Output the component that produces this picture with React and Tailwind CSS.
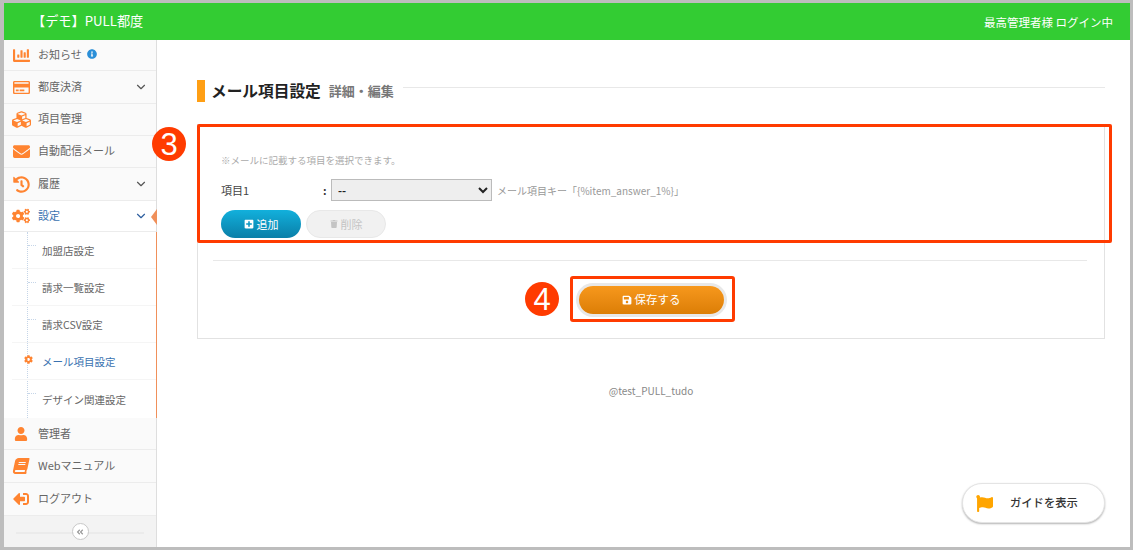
import React from "react";
import { FaChartBar, FaRegCreditCard, FaCubes, FaEnvelope, FaHistory, FaCogs, FaUser, FaBook, FaSignOutAlt, FaFlag, FaPlusSquare, FaTrash, FaSave, FaInfoCircle, FaAngleDoubleLeft, FaCog } from "react-icons/fa";
import { LuChevronDown } from "react-icons/lu";

function Row({ icon: Icon, label, chevron, h, active, info, size = 17, iconClass = "", labelClass = "mt-[-2px]" }) {
  return (
    <div className={`flex items-center border-b border-[#ececec] ${h} ${active ? "bg-white" : "bg-[#fafafa]"} pr-[8px] relative`}>
      <span className="w-[34px] flex justify-center text-[#ff8431]"><Icon size={size} className={iconClass} /></span>
      <span className={`${labelClass} text-[11px] ${active ? "text-[#3a72b0]" : "text-[#666]"} flex items-center gap-[5px]`}>
        {label}
        {info && <FaInfoCircle size={10} className="text-[#2a8fd8]" />}
      </span>
      {chevron && <LuChevronDown size={14} className={`ml-auto ${active ? "text-[#2f5f9f]" : "text-[#555]"}`} />}
      {active && <span className="absolute right-[-1px] top-[8px] w-0 h-0 border-y-[8px] border-y-transparent border-r-[6px] border-r-[#f0905a]" />}
    </div>
  );
}

function Sub({ label, current, last }) {
  return (
    <div className={`relative flex items-center h-[37px] ml-[8px] pl-[30px] pt-[2px] ${last ? "" : "border-b border-[#f5f5f5]"} text-[10.5px] ${current ? "text-[#3a72b0]" : "text-[#666]"}`}>
      {current ? (
        <FaCog size={9} className="absolute left-[12px] top-[12px] text-[#ff8431]" />
      ) : (
        <span className="absolute left-[16px] top-[13px] w-[8px] border-t border-dotted border-[#c5d5e8]" />
      )}
      {label}
    </div>
  );
}

function Circle({ n }) {
  return (
    <span className="w-[34px] h-[34px] rounded-full bg-[#ff3b00] text-white flex items-center justify-center text-[31px] leading-none font-['Liberation_Sans',sans-serif]">{n}</span>
  );
}

export default function App() {
  return (
    <div className="w-[1133px] h-[550px] overflow-hidden bg-[#bdbdbd] pt-[3px] pl-[4px] pr-[3px] pb-[3px] font-['Noto_Sans_CJK_JP','Noto_Sans',sans-serif]">
      <div className="relative h-[544px] bg-white flex flex-col overflow-hidden">
        <header className="h-[37px] shrink-0 bg-[#33cc33] flex items-center text-white pl-[28px] pr-[17px]">
          <span className="text-[13.2px] mt-[-2px]">【デモ】PULL都度</span>
          <span className="ml-auto text-[11.5px] mt-[3px]">最高管理者様 ログイン中</span>
        </header>
        <div className="flex flex-1 min-h-0">
          <aside className="w-[153px] shrink-0 border-r border-[#dedede] flex flex-col">
            <Row icon={FaChartBar} label="お知らせ" info h="h-[31px]" />
            <Row icon={FaRegCreditCard} label="都度決済" chevron h="h-[33px]" />
            <Row icon={FaCubes} label="項目管理" h="h-[32px]" size={19} />
            <Row icon={FaEnvelope} label="自動配信メール" h="h-[32px]" />
            <Row icon={FaHistory} label="履歴" chevron h="h-[33px]" />
            <Row icon={FaCogs} label="設定" chevron active h="h-[31px]" size={18} />
            <div className="relative border-r border-[#f0905a] mr-[-1px] h-[186px]">
              <span className="absolute left-[23px] top-0 bottom-0 border-l border-dotted border-[#c5d5e8]" />
              <Sub label="加盟店設定" />
              <Sub label="請求一覧設定" />
              <Sub label="請求CSV設定" />
              <Sub label="メール項目設定" current />
              <Sub label="デザイン関連設定" last />
            </div>
            <Row icon={FaUser} label="管理者" h="h-[32px]" size={14} labelClass="mt-[0px]" />
            <Row icon={FaBook} label="Webマニュアル" h="h-[33px]" iconClass="-skew-x-12" size={16} labelClass="mt-[-1px]" />
            <Row icon={FaSignOutAlt} label="ログアウト" h="h-[33px]" iconClass="-scale-x-100" size={16} />
            <div className="flex-1 bg-[#f3f3f3] relative flex items-center justify-center">
              <span className="absolute left-[12px] right-[12px] top-1/2 border-t-2 border-[#ebebeb]" />
              <span className="relative w-[17px] h-[17px] rounded-full border border-[#c8c8c8] bg-white flex items-center justify-center text-[#999]"><FaAngleDoubleLeft size={8} /></span>
            </div>
          </aside>

          <main className="flex-1 pl-[40px] pr-[25px] pt-[39px] relative">
            <div className="flex items-center h-[23px]">
              <span className="w-[8px] h-[22px] bg-[#ff9f14]" />
              <span className="ml-[6px] text-[15.7px] font-bold text-[#222]">メール項目設定</span>
              <span className="ml-[8px] text-[13px] font-bold text-[#777]">詳細・編集</span>
              <span className="ml-[9px] flex-1 border-t border-[#e8e8e8] mb-[7px]" />
            </div>
            <div className="relative mt-[22px] h-[215px] border border-[#e2e2e2] pl-[23px] pr-[17px] pt-[28px]">
              <p className="text-[9.5px] leading-[14px] text-[#aaa]">※メールに記載する項目を選択できます。</p>
              <div className="flex items-center mt-[12px] h-[22px]">
                <span className="w-[102px] text-[11px] text-[#444]">項目1</span>
                <span className="w-[8px] text-[11px] font-bold text-[#333]">:</span>
                <select className="w-[161px] h-[22px] border border-[#bbb] bg-[#eeeeee] text-[11px] text-[#222] pl-[2px] font-bold" defaultValue="--">
                  <option>--</option>
                </select>
                <span className="ml-[5px] text-[10px] text-[#999]">メール項目キー「{"{%item_answer_1%}"}」</span>
              </div>
              <div className="flex gap-[5px] mt-[9px]">
                <button className="w-[80px] h-[28px] rounded-full bg-gradient-to-b from-[#12b0dc] to-[#0a7fa8] text-white text-[11px] flex items-center justify-center gap-[3px]"><FaPlusSquare size={10} />追加</button>
                <button className="w-[80px] h-[28px] rounded-full bg-[#f1f1f1] border border-[#e8e8e8] text-[#c4c4c4] text-[11px] flex items-center justify-center gap-[3px]"><FaTrash size={8} />削除</button>
              </div>
              <div className="border-t border-[#e8e8e8] mt-[22px] ml-[-8px]" />
              <div className="flex justify-center mt-[25px] ml-[-6px]">
                <button className="w-[145px] h-[28px] rounded-full bg-gradient-to-b from-[#f7981c] to-[#dc7e05] text-white text-[11.5px] flex items-center justify-center gap-[3px] ring-[3px] ring-[#e8e8e8]"><FaSave size={10} />保存する</button>
              </div>
            </div>
            <p className="text-center text-[10px] text-[#888] mt-[44px]">@test_PULL_tudo</p>

            {/* annotations */}
            <div className="absolute left-[40px] top-[84px] w-[915px] h-[119px] border-[3px] border-[#ff3b00] rounded-[2px]" />
            <div className="absolute left-[413px] top-[236px] w-[165px] h-[46px] border-[3px] border-[#ff3b00] rounded-[3px]" />
            <div className="absolute left-[-5px] top-[87px]"><Circle n="3" /></div>
            <div className="absolute left-[368px] top-[242px]"><Circle n="4" /></div>

            <button className="absolute left-[805px] top-[443px] w-[143px] h-[40px] rounded-full bg-white border border-[#e4e4e4] shadow-[0_1px_2px_rgba(0,0,0,0.3)] flex items-center pl-[13px] text-[11.3px] font-medium text-[#333]">
              <FaFlag size={17} className="text-[#ffa500]" />
              <span className="ml-[17px] mt-[-2px]">ガイドを表示</span>
            </button>
          </main>
        </div>
      </div>
    </div>
  );
}
